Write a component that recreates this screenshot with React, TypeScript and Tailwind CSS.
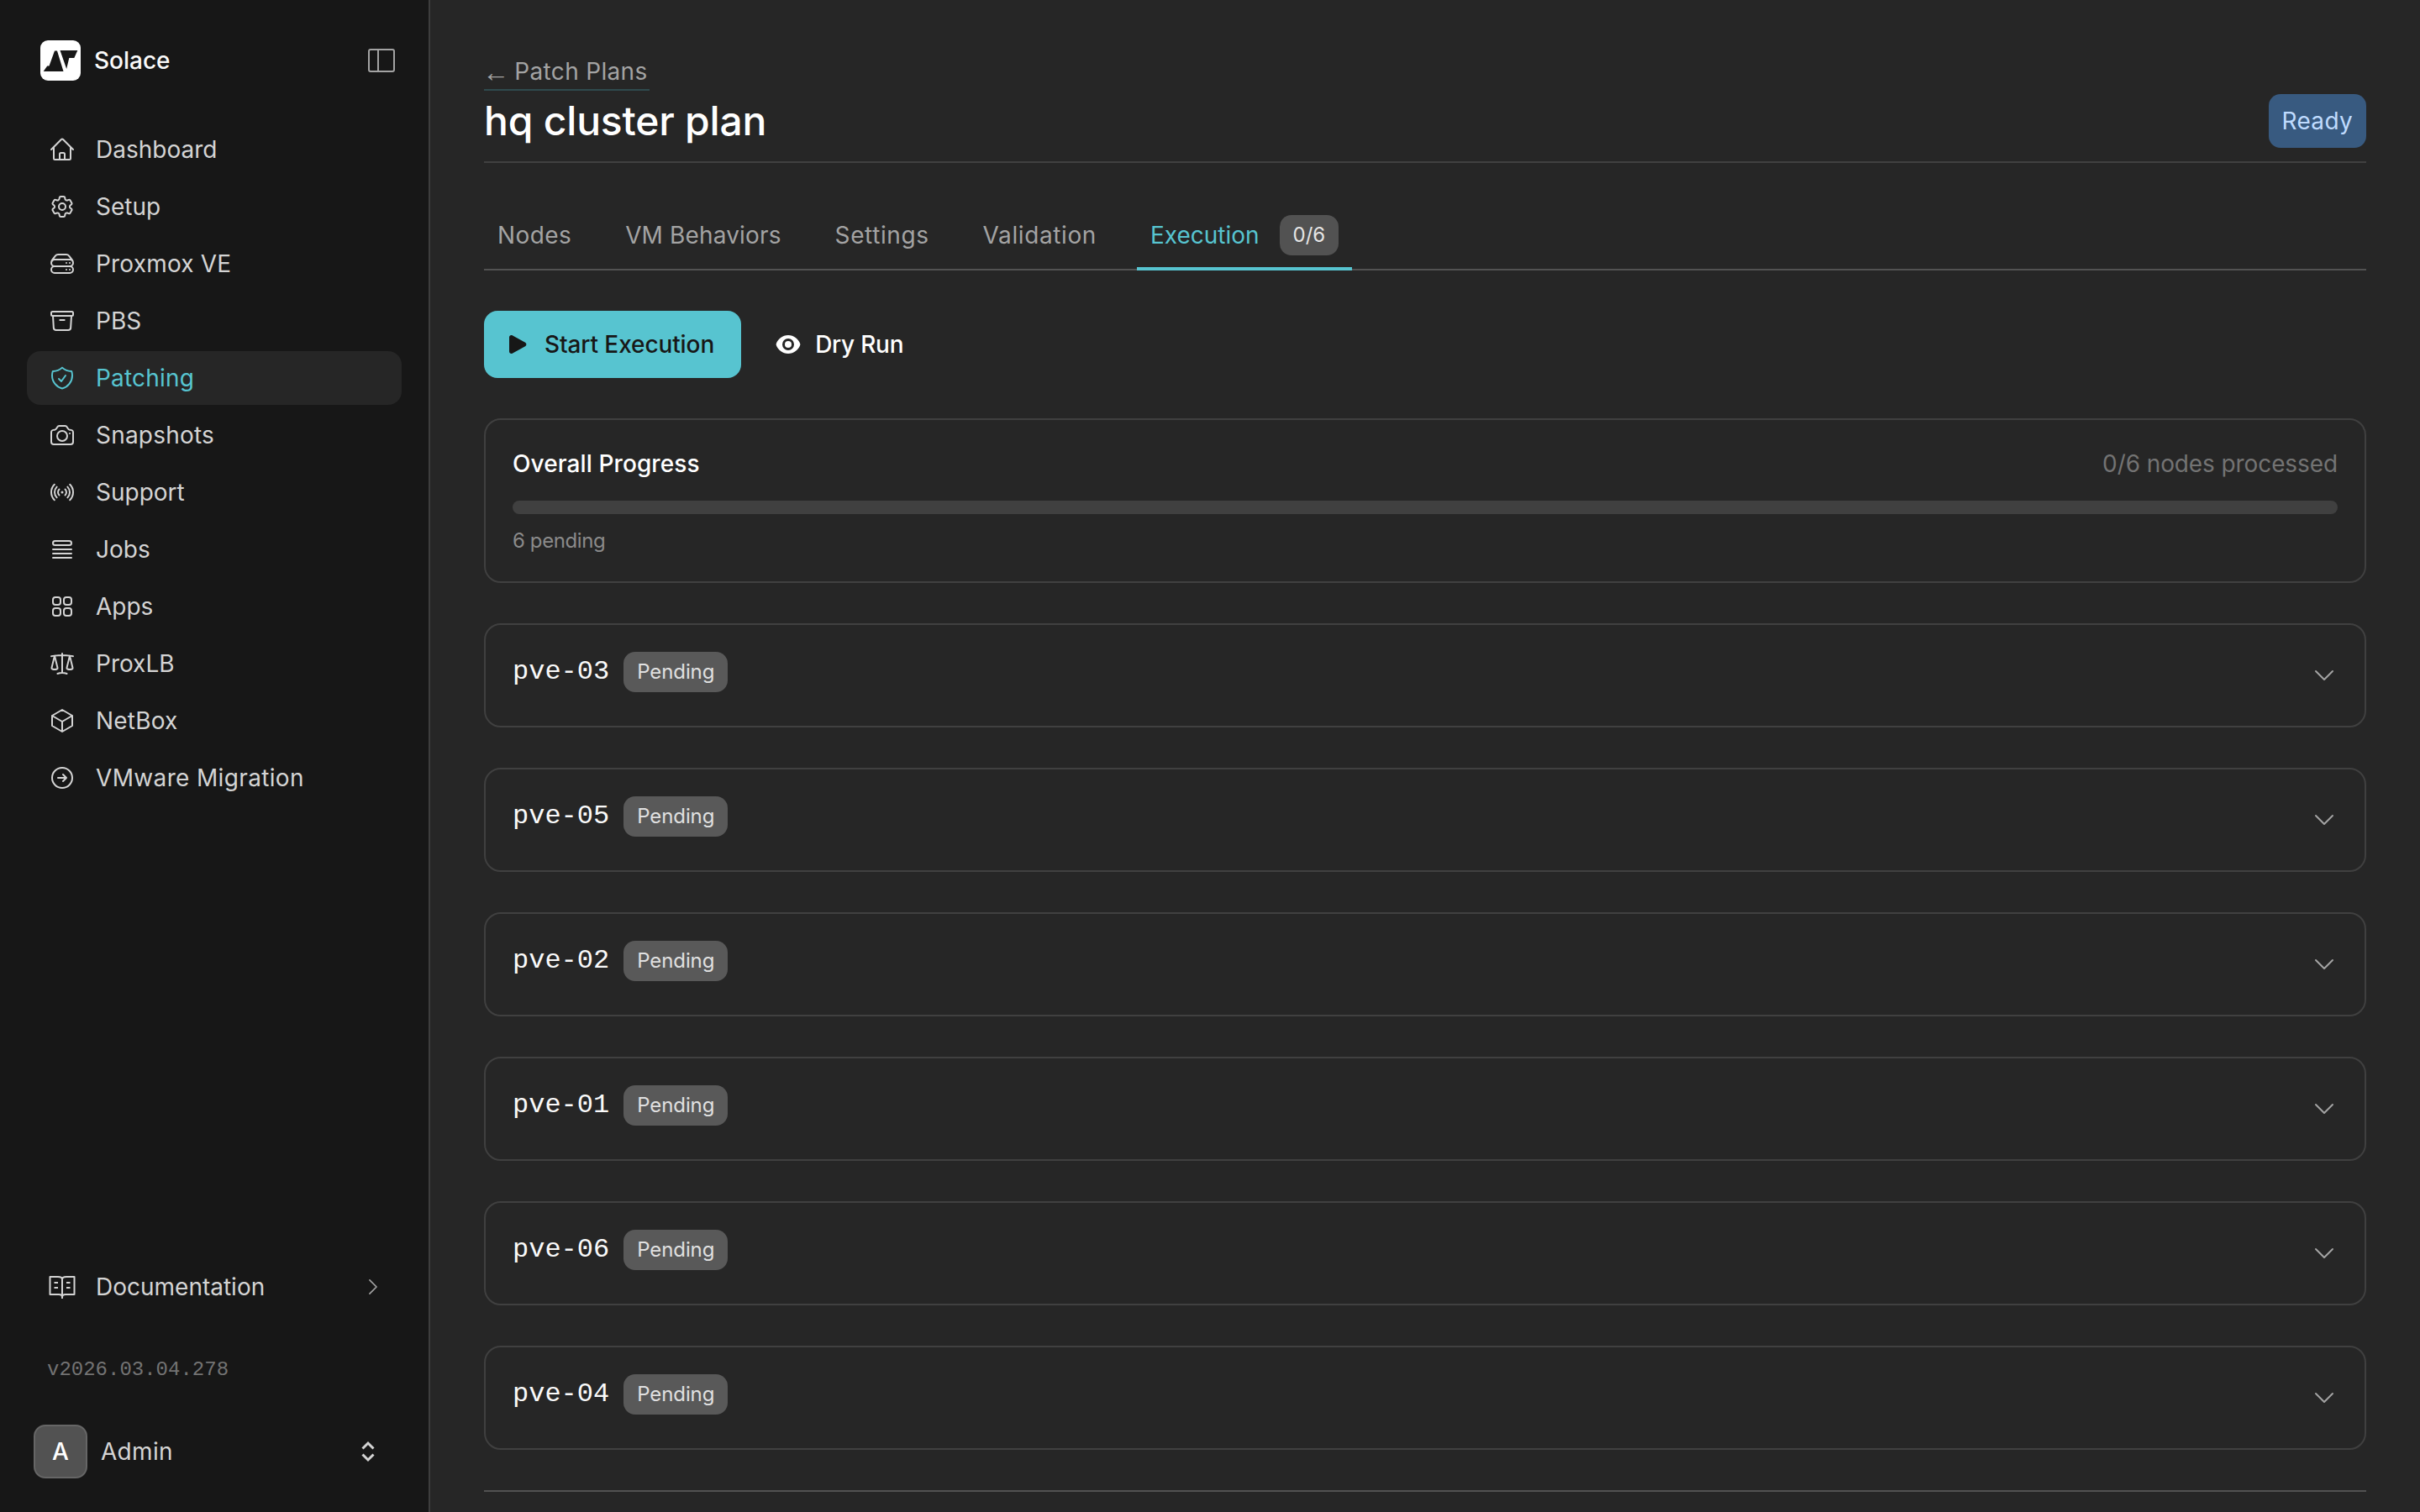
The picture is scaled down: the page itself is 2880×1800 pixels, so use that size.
import React from "react";
import {
  HiEye,
  HiOutlineArchiveBox,
  HiOutlineArrowRightCircle,
  HiOutlineCamera,
  HiOutlineChevronDown,
  HiOutlineChevronRight,
  HiOutlineCog6Tooth,
  HiOutlineCube,
  HiOutlineHome,
  HiOutlineQueueList,
  HiOutlineScale,
  HiOutlineServerStack,
  HiOutlineShieldCheck,
  HiOutlineSignal,
  HiOutlineSquares2X2,
  HiPlay,
} from "react-icons/hi2";

const navItems = [
  { label: "Dashboard", icon: HiOutlineHome, tracking: "" },
  { label: "Setup", icon: HiOutlineCog6Tooth, tracking: "" },
  { label: "Proxmox VE", icon: HiOutlineServerStack, tracking: "tracking-[0.2px]" },
  { label: "PBS", icon: HiOutlineArchiveBox, tracking: "" },
  { label: "Patching", icon: HiOutlineShieldCheck, tracking: "tracking-[0.2px]", active: true },
  { label: "Snapshots", icon: HiOutlineCamera, tracking: "tracking-[0.2px]" },
  { label: "Support", icon: HiOutlineSignal, tracking: "" },
  { label: "Jobs", icon: HiOutlineQueueList, tracking: "" },
  { label: "Apps", icon: HiOutlineSquares2X2, tracking: "" },
  { label: "ProxLB", icon: HiOutlineScale, tracking: "" },
  { label: "NetBox", icon: HiOutlineCube, tracking: "tracking-[0.2px]" },
  { label: "VMware Migration", icon: HiOutlineArrowRightCircle, tracking: "tracking-[0.35px]" },
];

const tabs = [
  { label: "Nodes", tracking: "tracking-[0.4px]" },
  { label: "VM Behaviors", tracking: "tracking-[0.15px]" },
  { label: "Settings", tracking: "tracking-[0.6px]" },
  { label: "Validation", tracking: "tracking-[0.6px]" },
];
const nodes = ["pve-03", "pve-05", "pve-02", "pve-01", "pve-06", "pve-04"];

const Logo = () => (
  <svg viewBox="0 0 48 48" className="size-12 shrink-0">
    <rect width="48" height="48" rx="9" fill="#ffffff" />
    <path d="M3.7 37 L8.2 30.5 H10.5 L17 12.5 H20 L27.5 37 Z" fill="#171717" />
    <path d="M23.5 12 H44.3 L40.3 21 H34.3 L31.2 34 Z" fill="#171717" />
  </svg>
);

const PanelIcon = () => (
  <svg viewBox="0 0 32 28" className="h-7 w-8 text-[#a3a3a3]" fill="none" stroke="currentColor" strokeWidth="2">
    <rect x="1" y="1" width="30" height="26" rx="2" />
    <path d="M12 1 V27" />
  </svg>
);

const BookIcon = () => (
  <svg viewBox="0 0 32 32" className="size-8 shrink-0" fill="none" stroke="currentColor" strokeWidth="2" strokeLinejoin="round">
    <path d="M1.5 4 H11 C13.5 4 16 5 16 7 C16 5 18.5 4 21 4 H30.5 V25 H20 C18 25 16 26 16 28 C16 26 14 25 12 25 H1.5 Z" />
    <path d="M16 7 V30" />
    <path d="M6.5 11 H11 M6.5 17 H11 M21 11 H25.5 M21 17 H25.5" />
  </svg>
);

const UpDownIcon = () => (
  <svg viewBox="0 0 32 32" className="size-8 text-[#d4d4d4]" fill="none" stroke="currentColor" strokeWidth="3">
    <path d="M9.5 12.5 L16 6 L22.5 12.5" />
    <path d="M9.5 19.5 L16 26 L22.5 19.5" />
  </svg>
);

const Sidebar = () => (
  <aside className="flex h-[1800px] w-[512px] shrink-0 flex-col border-r-2 border-[#3d3d3d] bg-[#171717] pt-12 pb-10">
    <div className="flex h-12 items-center justify-between pr-10 pl-12">
      <div className="flex items-center gap-4">
        <Logo />
        <span className="text-[28px] font-medium text-[#fafafa]">Solace</span>
      </div>
      <PanelIcon />
    </div>

    <nav className="mt-[50px] flex flex-col gap-1 px-8">
      {navItems.map((item) => (
        <div
          key={item.label}
          className={`flex h-16 items-center gap-6 rounded-2xl pl-[26px] text-[28px] ${item.tracking} ${
            item.active ? "bg-[#262626] text-[#57c4d0]" : "text-[#d4d4d4]"
          }`}
        >
          <item.icon className="size-8 shrink-0" />
          <span>{item.label}</span>
        </div>
      ))}
    </nav>

    <div className="flex-1" />

    <div className="flex h-16 items-center justify-between pr-[53px] pl-[58px] text-[28px] text-[#d4d4d4]">
      <div className="flex items-center gap-6">
        <BookIcon />
        <span>Documentation</span>
      </div>
      <HiOutlineChevronRight className="size-[26px] text-[#a3a3a3]" />
    </div>

    <div className="mt-[51px] pl-14 font-['Liberation_Mono',monospace] text-2xl text-[#737373]">
      v2026.03.04.278
    </div>

    <div className="mt-[49px] flex items-center justify-between pr-[56px] pl-10">
      <div className="flex items-center gap-4">
        <div className="flex size-16 items-center justify-center rounded-[14px] border-2 border-[#666666] bg-[#525252] text-[28px] font-medium text-white">
          A
        </div>
        <span className="text-[28px] tracking-[0.3px] text-[#d4d4d4]">Admin</span>
      </div>
      <UpDownIcon />
    </div>
  </aside>
);

const NodeCard = ({ name }: { name: string }) => (
  <div className="mt-12 flex h-[124px] items-start justify-between rounded-[20px] border-2 border-[#404040] p-8">
    <div className="flex items-center gap-[17px]">
      <span className="font-['Liberation_Mono',monospace] text-[32px] leading-10 text-[#fafafa]">{name}</span>
      <span className="flex h-12 items-center rounded-[14px] bg-[#595959] px-4 text-2xl tracking-[-0.1px] text-[#e0e0e0]">Pending</span>
    </div>
    <div className="flex h-14 items-center">
      <HiOutlineChevronDown className="size-8 text-[#a3a3a3]" />
    </div>
  </div>
);

export default function App() {
  return (
    <div className="flex h-[1800px] w-[2880px] overflow-hidden bg-[#262626] font-['Inter',sans-serif]">
      <Sidebar />
      <main className="h-[1800px] flex-1 overflow-hidden px-16 pt-16">
        <a className="inline-flex h-11 items-center gap-[6px] border-b-2 border-[#2f4a4e] pr-0.5 text-[28px] tracking-[0.33px] text-[#a3a3a3]">
          <span className="mt-[2px] ml-[-2px] font-['Liberation_Sans',sans-serif] text-[32px] leading-none">←</span>
          <span>Patch Plans</span>
        </a>

        <div className="mt-1 flex items-center justify-between border-b-2 border-[#404040] pb-4">
          <h1 className="text-5xl leading-16 font-medium tracking-[-0.2px] text-white">hq cluster plan</h1>
          <span className="flex h-16 items-center rounded-[14px] bg-[#385a80] px-4 text-[28px] tracking-[0.3px] text-[#bfdbfe]">Ready</span>
        </div>

        <div className="mt-[46px] flex h-[82px] gap-8 border-b-2 border-[#525252]">
          {tabs.map((tab) => (
            <div
              key={tab.label}
              className={`mb-[-2px] flex h-[82px] items-center border-b-4 border-transparent px-4 pt-4 pb-[14px] text-[28px] text-[#a3a3a3] ${tab.tracking}`}
            >
              {tab.label}
            </div>
          ))}
          <div className="mb-[-2px] flex h-[82px] items-center gap-6 border-b-4 border-[#57c4d0] px-4 pt-4 pb-[14px] text-[28px] text-[#57c4d0]">
            <span>Execution</span>
            <span className="flex h-12 items-center rounded-[14px] bg-[#525252] px-4 text-2xl text-[#e5e5e5]">0/6</span>
          </div>
        </div>

        <div className="mt-12 flex gap-4">
          <button className="flex h-20 items-center gap-4 rounded-2xl bg-[#57c4d0] pr-8 pl-6 text-[28px] font-medium tracking-[-0.1px] text-[#171717]">
            <HiPlay className="size-8" />
            Start Execution
          </button>
          <button className="flex h-20 items-center gap-4 px-6 text-[28px] font-medium tracking-[-0.25px] text-white">
            <HiEye className="size-8" />
            Dry Run
          </button>
        </div>

        <div className="mt-12 rounded-[20px] border-2 border-[#404040] p-8">
          <div className="flex items-center justify-between text-[28px] leading-10">
            <span className="font-medium tracking-[0.1px] text-white">Overall Progress</span>
            <span className="tracking-[-0.1px] text-[#737373]">0/6 nodes processed</span>
          </div>
          <div className="mt-6 h-4 rounded-full bg-[#404040]" />
          <div className="mt-4 text-2xl leading-8 tracking-[-0.4px] text-[#8a8a8a]">6 pending</div>
        </div>

        {nodes.map((name) => (
          <NodeCard key={name} name={name} />
        ))}

        <div className="mt-12 border-t-2 border-[#525252]" />
      </main>
    </div>
  );
}
